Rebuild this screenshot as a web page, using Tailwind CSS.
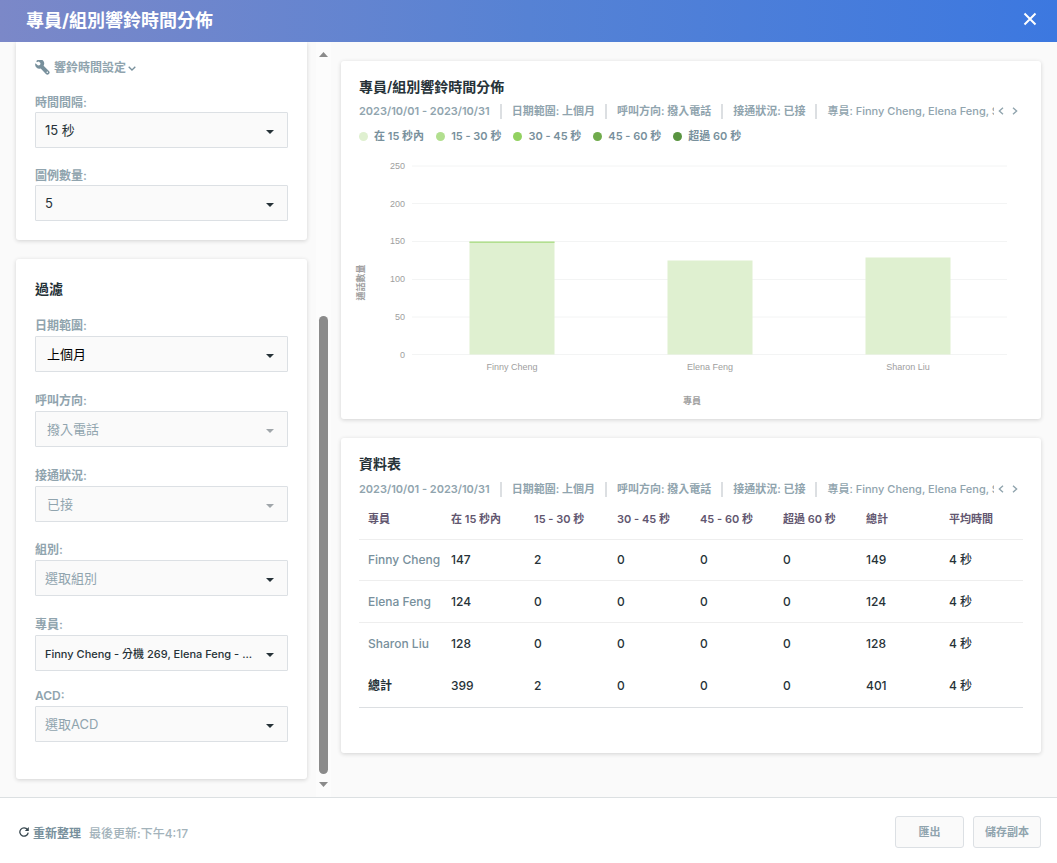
<!DOCTYPE html>
<html lang="zh-Hant">
<head>
<meta charset="utf-8">
<meta name="viewport" content="width=device-width, initial-scale=1">
<title>專員/組別響鈴時間分佈</title>
<script src="https://cdn.jsdelivr.net/npm/@tailwindcss/browser@4"></script>
</head>
<body class="flex h-screen flex-col overflow-hidden bg-[#fafafa] font-['Inter','Noto_Sans_CJK_TC',sans-serif] text-xs text-[#263238]">
<svg class="hidden">
  <symbol id="caret" viewBox="0 0 8 4"><path d="M0 0h8L4 4z" fill="currentColor"/></symbol>
  <symbol id="chev-left" viewBox="0 0 6 8"><path d="M5 .8 1.4 4 5 7.2" fill="none" stroke="currentColor" stroke-width="1.4"/></symbol>
  <symbol id="chev-right" viewBox="0 0 6 8"><path d="M1 .8 4.600 4 1 7.200" fill="none" stroke="currentColor" stroke-width="1.4"/></symbol>
</svg>

<header class="flex h-[42px] shrink-0 items-center justify-between bg-linear-to-r from-[#7b88c8] via-[#5682d4] via-50% to-[#3c78e0] pr-5 pl-[26px] text-white">
  <h1 class="text-lg font-bold">專員/組別響鈴時間分佈</h1>
  <button type="button" aria-label="關閉" class="mb-1 flex size-[14px] items-center justify-center">
    <svg class="size-[14px]" viewBox="0 0 14 14"><path d="M1.500 1.500l11 11M12.500 1.500l-11 11" stroke="currentColor" stroke-width="2" fill="none"/></svg>
  </button>
</header>

<main class="flex min-h-0 flex-1">
  <aside class="flex w-[316px] shrink-0 flex-col gap-[19px] overflow-hidden pr-[9px] pl-4">
    <section class="rounded-b-[3px] bg-white px-[19px] pt-4 pb-[19px] shadow-[0_1px_4px_rgba(0,0,0,0.16)]">
      <button type="button" class="flex h-5 items-center text-[#90a4ae]">
        <svg class="mr-1 mb-0.5 size-[15px]" viewBox="0 0 15 15"><path d="M1.300 1.300A4.200 4.200 0 0 1 8.600 5.700l5.300 5.200a2.100 2.100 0 0 1-3 3L5.700 8.600A4.200 4.200 0 0 1 .4 3.300l2.700 2.300 2-.5.400-2L3.600 1.400 1.900 2.300zM12.300 11.500a.8.8 0 1 0 0 1.600.8.8 0 0 0 0-1.600z" fill="#78909c" fill-rule="evenodd"/></svg>
        <span class="font-semibold">響鈴時間設定</span>
        <svg class="ml-0.5 h-[5px] w-2" viewBox="0 0 8 5"><path d="M.7.700 4 4 7.300.7" fill="none" stroke="#78909c" stroke-width="1.300"/></svg>
      </button>
      <div class="mt-[14px] flex flex-col">
        <label for="interval" class="h-5 font-semibold leading-[22px] text-[#90a4ae]">時間間隔:</label>
        <div class="relative">
          <select id="interval" class="block h-9 w-full appearance-none rounded-[1px] border border-[#dce0e4] bg-[#fafafa] pt-0.5 pr-8 pl-[9px] text-[13px]"><option>15 秒</option></select>
          <svg class="pointer-events-none absolute top-[18px] right-[14px] h-1 w-2"><use href="#caret"/></svg>
        </div>
      </div>
      <div class="mt-[17px] flex flex-col">
        <label for="legend" class="h-5 font-semibold leading-[22px] text-[#90a4ae]">圖例數量:</label>
        <div class="relative">
          <select id="legend" class="block h-9 w-full appearance-none rounded-[1px] border border-[#dce0e4] bg-[#fafafa] pt-0.5 pr-8 pl-[9px] text-[13px]"><option>5</option></select>
          <svg class="pointer-events-none absolute top-[18px] right-[14px] h-1 w-2"><use href="#caret"/></svg>
        </div>
      </div>
    </section>

    <section class="rounded-[3px] bg-white px-[19px] pt-5 pb-[37px] shadow-[0_1px_4px_rgba(0,0,0,0.16)]">
      <h2 class="mb-[17px] h-5 text-sm font-semibold leading-5">過濾</h2>
      <div class="flex flex-col">
        <label for="range" class="h-5 font-semibold leading-5 text-[#90a4ae]">日期範圍:</label>
        <div class="relative">
          <select id="range" class="block h-9 w-full appearance-none rounded-[1px] border border-[#dce0e4] bg-[#fafafa] pt-0.5 pr-8 pl-[11px] text-[13px] text-black"><option>上個月</option></select>
          <svg class="pointer-events-none absolute top-[18px] right-[14px] h-1 w-2"><use href="#caret"/></svg>
        </div>
      </div>
      <div class="mt-[19px] flex flex-col">
        <label for="direction" class="h-5 font-semibold leading-5 text-[#90a4ae]">呼叫方向:</label>
        <div class="relative">
          <select id="direction" disabled class="block h-9 w-full appearance-none rounded-[1px] border border-[#dce0e4] bg-[#fafafa] pt-0.5 pr-8 pl-[11px] text-[13px] text-[#90a4ae] opacity-100"><option>撥入電話</option></select>
          <svg class="pointer-events-none absolute top-[18px] right-[14px] h-1 w-2 text-[#a0a6aa]"><use href="#caret"/></svg>
        </div>
      </div>
      <div class="mt-[19px] flex flex-col">
        <label for="status" class="h-5 font-semibold leading-5 text-[#90a4ae]">接通狀況:</label>
        <div class="relative">
          <select id="status" disabled class="block h-9 w-full appearance-none rounded-[1px] border border-[#dce0e4] bg-[#fafafa] pt-0.5 pr-8 pl-[11px] text-[13px] text-[#90a4ae] opacity-100"><option>已接</option></select>
          <svg class="pointer-events-none absolute top-[18px] right-[14px] h-1 w-2 text-[#a0a6aa]"><use href="#caret"/></svg>
        </div>
      </div>
      <div class="mt-[18px] flex flex-col">
        <label for="group" class="h-5 font-semibold leading-5 text-[#90a4ae]">組別:</label>
        <div class="relative">
          <select id="group" class="block h-9 w-full appearance-none rounded-[1px] border border-[#dce0e4] bg-[#fafafa] pt-0.5 pr-8 pl-[9px] text-[13px] text-[#90a4ae]"><option>選取組別</option></select>
          <svg class="pointer-events-none absolute top-[18px] right-[14px] h-1 w-2"><use href="#caret"/></svg>
        </div>
      </div>
      <div class="mt-[19px] flex flex-col">
        <label for="agent" class="h-5 font-semibold leading-5 text-[#90a4ae]">專員:</label>
        <div class="relative">
          <select id="agent" class="block h-9 w-full appearance-none rounded-[1px] border border-[#dce0e4] bg-[#fafafa] pt-0.5 pr-6 pl-[9px] text-[11px] font-medium"><option>Finny Cheng - 分機 269, Elena Feng - ...</option></select>
          <svg class="pointer-events-none absolute top-[18px] right-[14px] h-1 w-2"><use href="#caret"/></svg>
        </div>
      </div>
      <div class="mt-[15px] flex flex-col">
        <label for="acd" class="h-5 font-semibold leading-5 text-[#90a4ae]">ACD:</label>
        <div class="relative">
          <select id="acd" class="block h-9 w-full appearance-none rounded-[1px] border border-[#dce0e4] bg-[#fafafa] pt-0.5 pr-8 pl-[9px] text-[13px] text-[#90a4ae]"><option>選取ACD</option></select>
          <svg class="pointer-events-none absolute top-[18px] right-[14px] h-1 w-2"><use href="#caret"/></svg>
        </div>
      </div>
    </section>
  </aside>

  <div class="flex w-[15px] shrink-0 flex-col items-center bg-[#fcfcfc] pt-[10px] pb-[10px]">
    <svg class="h-[5px] w-[9px] shrink-0" viewBox="0 0 9 5"><path d="M0 5 4.500 0 9 5z" fill="#8b8b8b"/></svg>
    <div class="mt-[259px] mb-2 w-[9px] flex-1 rounded-full bg-[#8b8b8b]"></div>
    <svg class="h-[5px] w-[9px] shrink-0" viewBox="0 0 9 5"><path d="M0 0 4.500 5 9 0z" fill="#8b8b8b"/></svg>
  </div>

  <div class="flex min-w-0 flex-1 flex-col gap-[19px] pt-[19px] pr-4 pl-[10px]">
    <section class="rounded-[3px] bg-white px-[18px] pt-4 pb-3 shadow-[0_1px_4px_rgba(0,0,0,0.16)]">
      <h2 class="h-5 text-sm font-semibold leading-5">專員/組別響鈴時間分佈</h2>
      <div class="mt-1 flex h-5 items-center text-[#90a4ae]">
        <div class="flex min-w-0 flex-1 items-center overflow-hidden text-[11px] font-semibold whitespace-nowrap">
          <span class="pr-[10px]">2023/10/01 - 2023/10/31</span>
          <span class="h-[15px] w-0.5 shrink-0 bg-[#dcdfe2]"></span><span class="px-[10px]">日期範圍: 上個月</span>
          <span class="h-[15px] w-0.5 shrink-0 bg-[#dcdfe2]"></span><span class="px-[10px]">呼叫方向: 撥入電話</span>
          <span class="h-[15px] w-0.5 shrink-0 bg-[#dcdfe2]"></span><span class="px-[10px]">接通狀況: 已接</span>
          <span class="h-[15px] w-0.5 shrink-0 bg-[#dcdfe2]"></span><span class="pl-[10px] font-medium">專員: Finny Cheng, Elena Feng, Sharon Liu</span>
        </div>
        <button type="button" aria-label="上一個" class="ml-1"><svg class="h-2 w-1.5"><use href="#chev-left"/></svg></button>
        <button type="button" aria-label="下一個" class="mr-[5px] ml-2"><svg class="h-2 w-1.5"><use href="#chev-right"/></svg></button>
      </div>
      <ul class="mt-[5px] flex h-5 items-center gap-3 text-[11px] font-semibold text-[#78909c]">
        <li class="flex items-center gap-1.5"><span class="size-[9px] rounded-full bg-[#dff0d0]"></span>在 15 秒內</li>
        <li class="flex items-center gap-1.5"><span class="size-[9px] rounded-full bg-[#b2df8f]"></span>15 - 30 秒</li>
        <li class="flex items-center gap-1.5"><span class="size-[9px] rounded-full bg-[#92d160]"></span>30 - 45 秒</li>
        <li class="flex items-center gap-1.5"><span class="size-[9px] rounded-full bg-[#70ab4c]"></span>45 - 60 秒</li>
        <li class="flex items-center gap-1.5"><span class="size-[9px] rounded-full bg-[#599440]"></span>超過 60 秒</li>
      </ul>
      <svg class="mt-1 block w-full overflow-visible" viewBox="359 150 664 257" role="img" aria-label="各專員通話數量">
        <g stroke="#f3f4f4" stroke-width="1">
          <path d="M412 166h595"/><path d="M412 203.500h595"/><path d="M412 241.500h595"/><path d="M412 279.500h595"/><path d="M412 317h595"/><path d="M412 354.500h595"/>
        </g>
        <g fill="#dff0d0">
          <rect x="469.500" y="241.500" width="85" height="113"/><rect x="667.500" y="260.500" width="85" height="94"/><rect x="865.500" y="257.500" width="85" height="97"/>
        </g>
        <rect x="469.500" y="241.500" width="85" height="1.500" fill="#b2df8f"/>
        <g class="font-['Liberation_Sans',sans-serif] text-[9px]" fill="#9e9e9e">
          <g text-anchor="end"><text x="405" y="169">250</text><text x="405" y="207">200</text><text x="405" y="244">150</text><text x="405" y="282">100</text><text x="405" y="320">50</text><text x="405" y="358">0</text></g>
          <g text-anchor="middle"><text x="512" y="370">Finny Cheng</text><text x="710" y="370">Elena Feng</text><text x="908" y="370">Sharon Liu</text></g>
        </g>
        <g class="font-['Noto_Sans_CJK_TC',sans-serif] text-[9px] font-bold" fill="#9e9e9e" text-anchor="middle">
          <text x="692" y="404">專員</text><text transform="translate(364 282.500) rotate(-90)">通話數量</text>
        </g>
      </svg>
    </section>

    <section class="rounded-[3px] bg-white px-[18px] pt-4 pb-[45px] shadow-[0_1px_4px_rgba(0,0,0,0.16)]">
      <h2 class="h-5 text-sm font-semibold leading-5">資料表</h2>
      <div class="mt-[5px] flex h-5 items-center text-[#90a4ae]">
        <div class="flex min-w-0 flex-1 items-center overflow-hidden text-[11px] font-semibold whitespace-nowrap">
          <span class="pr-[10px]">2023/10/01 - 2023/10/31</span>
          <span class="h-[15px] w-0.5 shrink-0 bg-[#dcdfe2]"></span><span class="px-[10px]">日期範圍: 上個月</span>
          <span class="h-[15px] w-0.5 shrink-0 bg-[#dcdfe2]"></span><span class="px-[10px]">呼叫方向: 撥入電話</span>
          <span class="h-[15px] w-0.5 shrink-0 bg-[#dcdfe2]"></span><span class="px-[10px]">接通狀況: 已接</span>
          <span class="h-[15px] w-0.5 shrink-0 bg-[#dcdfe2]"></span><span class="pl-[10px] font-medium">專員: Finny Cheng, Elena Feng, Sharon Liu</span>
        </div>
        <button type="button" aria-label="上一個" class="ml-1"><svg class="h-2 w-1.5"><use href="#chev-left"/></svg></button>
        <button type="button" aria-label="下一個" class="mr-[5px] ml-2"><svg class="h-2 w-1.5"><use href="#chev-right"/></svg></button>
      </div>
      <table class="w-full table-fixed border-separate border-spacing-0 border-b border-[#dcdfe2] text-left whitespace-nowrap [&_td]:p-0 [&_td]:pl-[9px] [&_td]:font-medium [&_th]:p-0 [&_th]:pl-[9px]">
        <thead class="text-[11px] text-[#62566f]">
          <tr class="h-[41px] [&>th]:border-b [&>th]:border-[#eeeeee] [&>th]:font-semibold"><th>專員</th><th>在 15 秒內</th><th>15 - 30 秒</th><th>30 - 45 秒</th><th>45 - 60 秒</th><th>超過 60 秒</th><th>總計</th><th>平均時間</th></tr>
        </thead>
        <tbody>
          <tr class="h-[41px] [&>*]:border-b [&>*]:border-[#eeeeee]"><th class="font-medium"><a href="#" class="text-[#78909c]">Finny Cheng</a></th><td>147</td><td>2</td><td>0</td><td>0</td><td>0</td><td>149</td><td>4 秒</td></tr>
          <tr class="h-[42px] [&>*]:border-b [&>*]:border-[#eeeeee]"><th class="font-medium"><a href="#" class="text-[#78909c]">Elena Feng</a></th><td>124</td><td>0</td><td>0</td><td>0</td><td>0</td><td>124</td><td>4 秒</td></tr>
          <tr class="h-[42px]"><th class="font-medium"><a href="#" class="text-[#78909c]">Sharon Liu</a></th><td>128</td><td>0</td><td>0</td><td>0</td><td>0</td><td>128</td><td>4 秒</td></tr>
          <tr class="h-[42px]"><th class="font-semibold">總計</th><td>399</td><td>2</td><td>0</td><td>0</td><td>0</td><td>401</td><td>4 秒</td></tr>
        </tbody>
      </table>
    </section>
  </div>
</main>

<footer class="flex h-[66px] shrink-0 items-center border-t border-[#dce0e2] bg-white pt-[3px] pr-4 pl-[19px]">
  <div class="flex items-center pt-[3px]">
    <button type="button" class="flex items-center gap-1 font-bold text-[#78909c]">
      <svg class="mb-[3px] size-[10px]" viewBox="0 0 10 10"><path d="M8.500 2.600A4.200 4.200 0 1 0 9.200 5.600" fill="none" stroke="#37474f" stroke-width="1.300"/><path d="M9.800 0v4H5.800z" fill="#37474f"/></svg>
      重新整理</button>
    <span class="ml-2 font-medium text-[#a3b3bb]">最後更新:下午4:17</span>
  </div>
  <div class="ml-auto flex gap-[9px] text-[11px] font-bold text-[#90a4ae]">
    <button type="button" class="h-8 w-[69px] rounded-[3px] border border-[#dce0e4] bg-[#fafafa]">匯出</button>
    <button type="button" class="h-8 w-[68px] rounded-[3px] border border-[#dce0e4] bg-[#fafafa]">儲存副本</button>
  </div>
</footer>
</body>
</html>
